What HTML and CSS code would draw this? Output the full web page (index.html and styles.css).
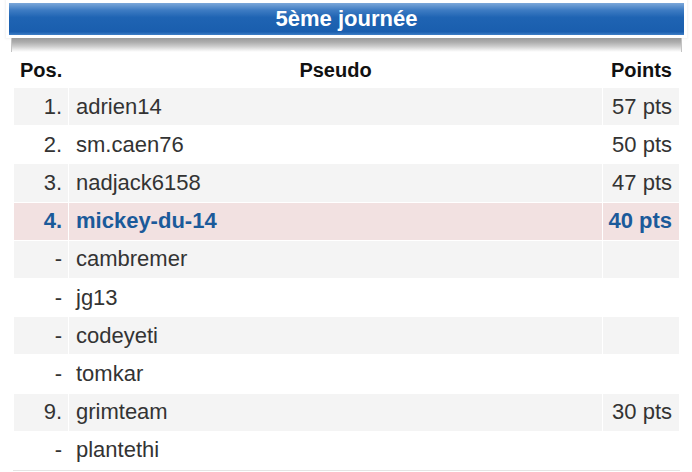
FILE: index.html
```html
<!DOCTYPE html>
<html lang="fr">
<head>
<meta charset="utf-8">
<title>5ème journée</title>
<link rel="stylesheet" href="styles.css">
</head>
<body>
<div class="title">5ème journée</div>
<div class="title-shadow"></div>
<table class="ranking">
  <thead>
    <tr><th class="pos">Pos.</th><th class="name">Pseudo</th><th class="pts">Points</th></tr>
  </thead>
  <tbody>
    <tr class="odd"><td class="pos">1.</td><td class="name">adrien14</td><td class="pts">57 pts</td></tr>
    <tr><td class="pos">2.</td><td class="name">sm.caen76</td><td class="pts">50 pts</td></tr>
    <tr class="odd"><td class="pos">3.</td><td class="name">nadjack6158</td><td class="pts">47 pts</td></tr>
    <tr class="me"><td class="pos">4.</td><td class="name">mickey-du-14</td><td class="pts">40 pts</td></tr>
    <tr class="odd"><td class="pos">-</td><td class="name">cambremer</td><td class="pts"></td></tr>
    <tr><td class="pos">-</td><td class="name">jg13</td><td class="pts"></td></tr>
    <tr class="odd"><td class="pos">-</td><td class="name">codeyeti</td><td class="pts"></td></tr>
    <tr><td class="pos">-</td><td class="name">tomkar</td><td class="pts"></td></tr>
    <tr class="odd"><td class="pos">9.</td><td class="name">grimteam</td><td class="pts">30 pts</td></tr>
    <tr><td class="pos">-</td><td class="name">plantethi</td><td class="pts"></td></tr>
  </tbody>
</table>
</body>
</html>
```

FILE: styles.css
```css
html, body {
  margin: 0;
  padding: 0;
  background: #ffffff;
}
body {
  font-family: "Liberation Sans", Arial, sans-serif;
  color: #333333;
  width: 692px;
  overflow: hidden;
}
.title {
  margin: 3px 8px 0 9px;
  height: 32px;
  line-height: 32px;
  text-align: center;
  color: #ffffff;
  font-weight: bold;
  font-size: 22px;
  background: linear-gradient(to bottom, #7ba7d9 0%, #3e7cc3 22%, #1f64b3 45%, #1a5eae 90%, #3f7fc6 100%);
  box-shadow: 0 0 0 3px #ffffff, 0 0 2px 4px rgba(0, 0, 0, 0.06);
}
.title-shadow {
  margin: 3px 10px 0 11px;
  height: 14px;
  background: linear-gradient(to bottom, #9a9a9a 0%, #adadad 30%, #cdcdcd 60%, #eeeeee 85%, #ffffff 100%);
  border-left: 1px solid #c4c4c4;
  border-right: 1px solid #c4c4c4;
}
.ranking {
  margin-left: 13px;
  width: 667px;
  border-collapse: separate;
  border-spacing: 1px;
  border-bottom: 1px solid #e4e4e4;
}
.ranking th {
  height: 34px;
  padding: 0;
  font-size: 20px;
  font-weight: bold;
  color: #111111;
  vertical-align: middle;
}
.ranking th.pos {
  text-align: left;
  padding-left: 6px;
}
.ranking th.name {
  text-align: center;
}
.ranking th.pts {
  text-align: right;
  padding-right: 7px;
}
.ranking td {
  height: 37.2px;
  padding: 0;
  font-size: 22px;
  vertical-align: middle;
}
.ranking td.pos {
  width: 48px;
  text-align: right;
  padding-right: 6px;
}
.ranking td.name {
  text-align: left;
  padding-left: 7px;
}
.ranking td.pts {
  width: 69px;
  text-align: right;
  padding-right: 7px;
}
.ranking tr.odd td {
  background: #f4f4f4;
}
.ranking tr.me td {
  background: #f2e1e1;
  color: #1b5a9a;
  font-weight: bold;
}
```
